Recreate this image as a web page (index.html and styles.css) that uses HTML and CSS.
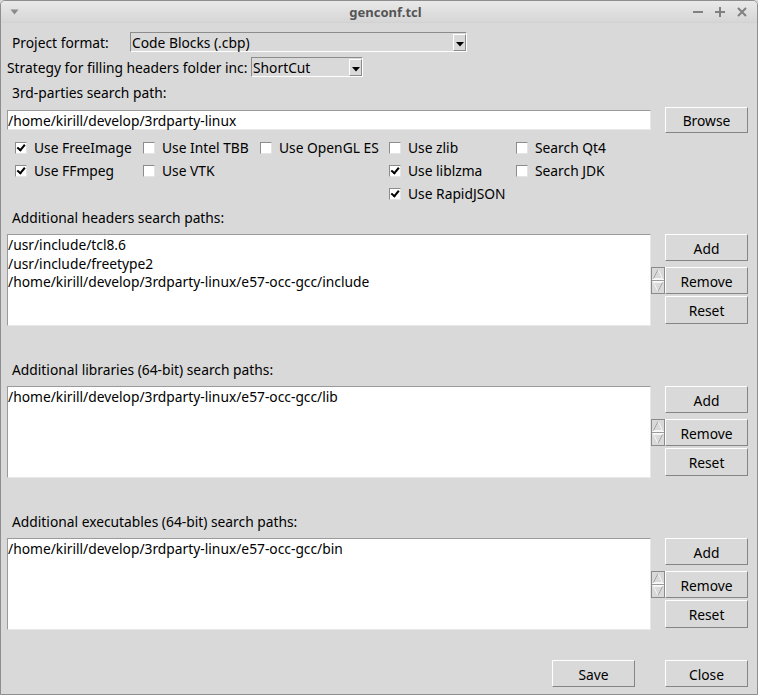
FILE: index.html
```html
<!DOCTYPE html>
<html>
<head>
<meta charset="utf-8">
<title>genconf.tcl</title>
<link rel="stylesheet" href="styles.css">
</head>
<body>
<div class="window">
  <div class="titlebar">
    <svg class="menu-tri" width="9" height="6" viewBox="0 0 9 6"><path d="M0.5 0.5 L8.5 0.5 L4.5 5.5 Z" fill="#8a8a8a"/></svg>
    <span class="title">genconf.tcl</span>
    <div class="ctrls">
      <svg width="12" height="12" viewBox="0 0 12 12"><path d="M1 6 H11" stroke="#808080" stroke-width="2"/></svg>
      <svg width="12" height="12" viewBox="0 0 12 12"><path d="M1 6 H11 M6 1 V11" stroke="#808080" stroke-width="2"/></svg>
      <svg width="12" height="12" viewBox="0 0 12 12"><path d="M2 2 L10 10 M10 2 L2 10" stroke="#808080" stroke-width="2"/></svg>
    </div>
  </div>
  <div class="content">
    <div class="row row-format">
      <span class="lbl lbl-format">Project format:</span>
      <div class="combo combo-format"><span class="combo-text">Code Blocks (.cbp)</span><span class="combo-btn"><svg width="8" height="5" viewBox="0 0 8 5"><path d="M0 0 H8 L4 4.5 Z" fill="#000"/></svg></span></div>
    </div>
    <div class="row row-strategy">
      <span class="lbl lbl-strategy">Strategy for filling headers folder inc:</span>
      <div class="combo combo-strategy"><span class="combo-text">ShortCut</span><span class="combo-btn"><svg width="8" height="5" viewBox="0 0 8 5"><path d="M0 0 H8 L4 4.5 Z" fill="#000"/></svg></span></div>
    </div>
    <div class="lbl section-lbl lbl-3rd">3rd-parties search path:</div>
    <div class="row row-entry">
      <div class="entry">/home/kirill/develop/3rdparty-linux</div>
      <button class="btn btn-browse">Browse</button>
    </div>
    <div class="checks">
      <label class="chk"><span class="box on"></span>Use FreeImage</label>
      <label class="chk"><span class="box"></span>Use Intel TBB</label>
      <label class="chk"><span class="box"></span>Use OpenGL ES</label>
      <label class="chk"><span class="box"></span>Use zlib</label>
      <label class="chk"><span class="box"></span>Search Qt4</label>
      <label class="chk"><span class="box on"></span>Use FFmpeg</label>
      <label class="chk"><span class="box"></span>Use VTK</label>
      <span></span>
      <label class="chk"><span class="box on"></span>Use liblzma</label>
      <label class="chk"><span class="box"></span>Search JDK</label>
      <span></span><span></span><span></span>
      <label class="chk"><span class="box on"></span>Use RapidJSON</label>
      <span></span>
    </div>

    <div class="lbl section-lbl lbl-first">Additional headers search paths:</div>
    <div class="listrow">
      <div class="listbox">
        <div>/usr/include/tcl8.6</div>
        <div>/usr/include/freetype2</div>
        <div>/home/kirill/develop/3rdparty-linux/e57-occ-gcc/include</div>
      </div>
      <div class="scroll"><svg width="14" height="27" viewBox="0 0 14 27"><rect x="0.5" y="0.5" width="13" height="26" fill="#d9d9d9" stroke="#8a8a8a"/><path d="M2.5 11.5 L7 2.5 L11.5 11.5 Z" fill="none" stroke="#f4f4f4"/><path d="M2.5 11.5 L7 2.5" stroke="#a0a0a0" fill="none"/><path d="M2.5 15.5 L7 24.5 L11.5 15.5 Z" fill="none" stroke="#f4f4f4"/><path d="M7 24.5 L11.5 15.5" stroke="#a0a0a0" fill="none"/><path d="M1 12.5 H13 M1 14.5 H13" stroke="#f8f8f8"/><path d="M1 13.5 H13" stroke="#9a9a9a"/></svg></div>
      <div class="btncol">
        <button class="btn">Add</button>
        <button class="btn btn-remove">Remove</button>
        <button class="btn btn-reset">Reset</button>
      </div>
    </div>

    <div class="lbl section-lbl lbl-next">Additional libraries (64-bit) search paths:</div>
    <div class="listrow">
      <div class="listbox">
        <div>/home/kirill/develop/3rdparty-linux/e57-occ-gcc/lib</div>
      </div>
      <div class="scroll"><svg width="14" height="27" viewBox="0 0 14 27"><rect x="0.5" y="0.5" width="13" height="26" fill="#d9d9d9" stroke="#8a8a8a"/><path d="M2.5 11.5 L7 2.5 L11.5 11.5 Z" fill="none" stroke="#f4f4f4"/><path d="M2.5 11.5 L7 2.5" stroke="#a0a0a0" fill="none"/><path d="M2.5 15.5 L7 24.5 L11.5 15.5 Z" fill="none" stroke="#f4f4f4"/><path d="M7 24.5 L11.5 15.5" stroke="#a0a0a0" fill="none"/><path d="M1 12.5 H13 M1 14.5 H13" stroke="#f8f8f8"/><path d="M1 13.5 H13" stroke="#9a9a9a"/></svg></div>
      <div class="btncol">
        <button class="btn">Add</button>
        <button class="btn btn-remove">Remove</button>
        <button class="btn btn-reset">Reset</button>
      </div>
    </div>

    <div class="lbl section-lbl lbl-next">Additional executables (64-bit) search paths:</div>
    <div class="listrow">
      <div class="listbox">
        <div>/home/kirill/develop/3rdparty-linux/e57-occ-gcc/bin</div>
      </div>
      <div class="scroll"><svg width="14" height="27" viewBox="0 0 14 27"><rect x="0.5" y="0.5" width="13" height="26" fill="#d9d9d9" stroke="#8a8a8a"/><path d="M2.5 11.5 L7 2.5 L11.5 11.5 Z" fill="none" stroke="#f4f4f4"/><path d="M2.5 11.5 L7 2.5" stroke="#a0a0a0" fill="none"/><path d="M2.5 15.5 L7 24.5 L11.5 15.5 Z" fill="none" stroke="#f4f4f4"/><path d="M7 24.5 L11.5 15.5" stroke="#a0a0a0" fill="none"/><path d="M1 12.5 H13 M1 14.5 H13" stroke="#f8f8f8"/><path d="M1 13.5 H13" stroke="#9a9a9a"/></svg></div>
      <div class="btncol">
        <button class="btn">Add</button>
        <button class="btn btn-remove">Remove</button>
        <button class="btn btn-reset">Reset</button>
      </div>
    </div>

    <div class="bottom">
      <button class="btn">Save</button>
      <button class="btn">Close</button>
    </div>
  </div>
</div>
</body>
</html>
```

FILE: styles.css
```css
* { box-sizing: border-box; }
html, body { margin: 0; padding: 0; background: #d9d9d9; }
body {
  font-family: "Noto Sans", "DejaVu Sans", sans-serif;
  font-size: 13.8px;
  color: #000;
}
.window {
  width: 758px;
  height: 695px;
  background: #d9d9d9;
  border: 1px solid #8e8e8e;
  border-radius: 5px 5px 0 0;
  overflow: hidden;
  display: flex;
  flex-direction: column;
}
.titlebar {
  height: 22px;
  flex: none;
  background: linear-gradient(#e9e9e9, #d6d6d6);
  border-bottom: 1px solid #d2d2d2;
  display: flex;
  align-items: center;
  position: relative;
}
.menu-tri { margin-left: 9px; }
.title {
  flex: 1;
  text-align: center;
  font-weight: bold;
  color: #555;
  font-size: 13px;
  margin-left: 60px;
}
.ctrls {
  display: flex;
  gap: 10px;
  margin-right: 9px;
}
.content {
  flex: 1;
  display: flex;
  flex-direction: column;
  padding-right: 9px;
}
.row { display: flex; align-items: center; }
.lbl { line-height: 18px; white-space: nowrap; padding-top: 1px; }
.row-format { margin-top: 9px; height: 20px; }
.lbl-format { width: 129px; padding-left: 11px; }
.row-strategy { margin-top: 5px; height: 20px; }
.lbl-strategy { width: 250px; padding-left: 6px; }
.combo {
  height: 20px;
  display: flex;
  border-top: 1px solid #8c8c8c;
  border-left: 1px solid #8c8c8c;
  border-bottom: 1px solid #fff;
  border-right: 1px solid #fff;
  background: #d9d9d9;
}
.combo-format { width: 337px; }
.combo-strategy { width: 112px; }
.combo-text { flex: 1; padding-left: 1px; line-height: 18px; padding-top: 1px; }
.combo-btn {
  width: 13px;
  margin: 1px 0 0;
  border-left: 1px solid #fff;
  border-top: 1px solid #fff;
  border-right: 1px solid #8c8c8c;
  border-bottom: 1px solid #8c8c8c;
  display: flex;
  align-items: flex-end;
  justify-content: center;
  padding-bottom: 3px;
}
.section-lbl { padding-left: 11px; height: 19px; padding-top: 3px; line-height: 16px; }
.lbl-3rd { margin-top: 5px; }
.row-entry { margin-top: 6px; height: 26px; }
.entry {
  margin-left: 6px;
  width: 644px;
  height: 20px;
  background: #fff;
  border-top: 1px solid #9a9a9a;
  border-left: 1px solid #9a9a9a;
  border-bottom: 1px solid #e8e8e8;
  border-right: 1px solid #e8e8e8;
  line-height: 18px;
  padding-top: 1px;
}
.btn {
  font: inherit;
  color: #000;
  background: #d9d9d9;
  border-top: 1px solid #fff;
  border-left: 1px solid #fff;
  border-right: 1px solid #858585;
  border-bottom: 1px solid #858585;
  border-radius: 0;
  width: 83px;
  height: 27px;
  padding: 1px 0 0;
  margin: 0;
}
.btn-browse { margin-left: 14px; height: 26px; }
.checks {
  margin-top: 3px;
  padding-left: 14px;
  display: grid;
  grid-template-columns: 128px 117px 129px 127px auto;
  grid-auto-rows: 23px;
}
.chk { display: flex; align-items: center; white-space: nowrap; }
.box {
  width: 12px;
  height: 12px;
  background: #fff;
  border-top: 1px solid #8c8c8c;
  border-left: 1px solid #8c8c8c;
  border-bottom: 1px solid #e4e4e4;
  border-right: 1px solid #e4e4e4;
  margin-right: 7px;
  position: relative;
}
.box.on::after {
  content: "";
  position: absolute;
  left: 2px;
  top: 0px;
  width: 3px;
  height: 6px;
  border-right: 2px solid #000;
  border-bottom: 2px solid #000;
  transform: rotate(40deg);
  transform-origin: 60% 60%;
}
.lbl-first { margin-top: 2px; }
.lbl-next { margin-top: 33px; }
.listrow {
  margin-top: 8px;
  display: flex;
  height: 92px;
  padding-left: 6px;
}
.listbox {
  width: 644px;
  height: 92px;
  background: #fff;
  border-top: 1px solid #9a9a9a;
  border-left: 1px solid #9a9a9a;
  border-bottom: 1px solid #e8e8e8;
  border-right: 1px solid #e8e8e8;
  line-height: 18.5px;
  padding-top: 1px;
  white-space: nowrap;
}
.scroll { width: 14px; margin-top: 33px; height: 27px; }
.scroll svg { display: block; }
.btncol { display: flex; flex-direction: column; }
.btn-remove { margin-top: 6px; }
.btn-reset { margin-top: 2px; height: 28px; }
.bottom {
  margin-top: 30px;
  display: flex;
  justify-content: flex-end;
  gap: 30px;
}
```
